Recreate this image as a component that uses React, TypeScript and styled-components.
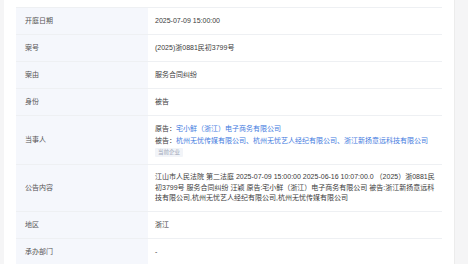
import styled, { createGlobalStyle } from "styled-components";

const GlobalStyle = createGlobalStyle`
  html, body {
    margin: 0;
    padding: 0;
    background: #f5f5f6;
  }
  body {
    font-family: "Liberation Sans", "Noto Sans CJK SC", sans-serif;
    -webkit-font-smoothing: antialiased;
  }
`;

interface Party {
  role: string;
  names: string[];
}

const parties: Party[] = [
  { role: "原告", names: ["宅小鲜（浙江）电子商务有限公司"] },
  {
    role: "被告",
    names: [
      "杭州无忧传媒有限公司",
      "杭州无忧艺人经纪有限公司",
      "浙江新扬意远科技有限公司",
    ],
  },
];

const notice =
  "江山市人民法院 第二法庭 2025-07-09 15:00:00 2025-06-16 10:07:00.0 （2025）浙0881民初3799号 服务合同纠纷 汪颖 原告:宅小鲜（浙江）电子商务有限公司 被告:浙江新扬意远科技有限公司,杭州无忧艺人经纪有限公司,杭州无忧传媒有限公司";

const App = () => {
  return (
    <>
      <GlobalStyle />
      <Page>
        <Card>
          <Table>
            <Row>
              <Label>开庭日期</Label>
              <Value>2025-07-09 15:00:00</Value>
            </Row>
            <Row>
              <Label>案号</Label>
              <Value>(2025)浙0881民初3799号</Value>
            </Row>
            <Row>
              <Label>案由</Label>
              <Value>服务合同纠纷</Value>
            </Row>
            <Row>
              <Label>身份</Label>
              <Value>被告</Value>
            </Row>
            <Row>
              <Label>当事人</Label>
              <Value>
                {parties.map((p) => (
                  <PartyLine key={p.role}>
                    {p.role}：
                    {p.names.map((n, i) => (
                      <Link key={n}>
                        {i > 0 && "、"}
                        {n}
                      </Link>
                    ))}
                  </PartyLine>
                ))}
                <Tag>当前企业</Tag>
              </Value>
            </Row>
            <Row>
              <Label>公告内容</Label>
              <Value>
                <Paragraph>{notice}</Paragraph>
              </Value>
            </Row>
            <Row>
              <Label>地区</Label>
              <Value>浙江</Value>
            </Row>
            <Row>
              <Label>承办部门</Label>
              <Value>-</Value>
            </Row>
          </Table>
        </Card>
      </Page>
    </>
  );
};
export default App;

const Page = styled.div`
  width: 468px;
  height: 264px;
  overflow: hidden;
  display: flex;
`;

const Card = styled.div`
  margin-left: 4px;
  width: 451px;
  background: #fff;
  border-right: 1px solid #ececec;
  padding: 7px 12px 0 12px;
  box-sizing: border-box;
`;

const Table = styled.div`
  border-top: 1px solid #eef0f3;
  display: flex;
  flex-direction: column;
`;

const Row = styled.div`
  display: grid;
  grid-template-columns: 132px 1fr;
  border-bottom: 1px solid #eef0f3;
  font-size: 7px;
  line-height: 12px;
  color: #3a3a3a;
`;

const Label = styled.div`
  background: #f5f7fc;
  padding: 7px 9px;
  display: flex;
  align-items: center;
  color: #555;
`;

const Value = styled.div`
  padding: 7px 2px 7px 7px;
  display: flex;
  flex-direction: column;
  justify-content: center;
`;

const PartyLine = styled.div`
  line-height: 11px;
  margin-bottom: 1px;
  white-space: nowrap;
`;

const Link = styled.span`
  color: #3f7be0;
  cursor: pointer;
`;

const Tag = styled.span`
  align-self: flex-start;
  margin-top: 1px;
  padding: 0 3px;
  font-size: 5.5px;
  line-height: 9px;
  color: #a0a8b8;
  background: #f2f4f8;
  border-radius: 1px;
`;

const Paragraph = styled.div`
  line-height: 10.5px;
`;
